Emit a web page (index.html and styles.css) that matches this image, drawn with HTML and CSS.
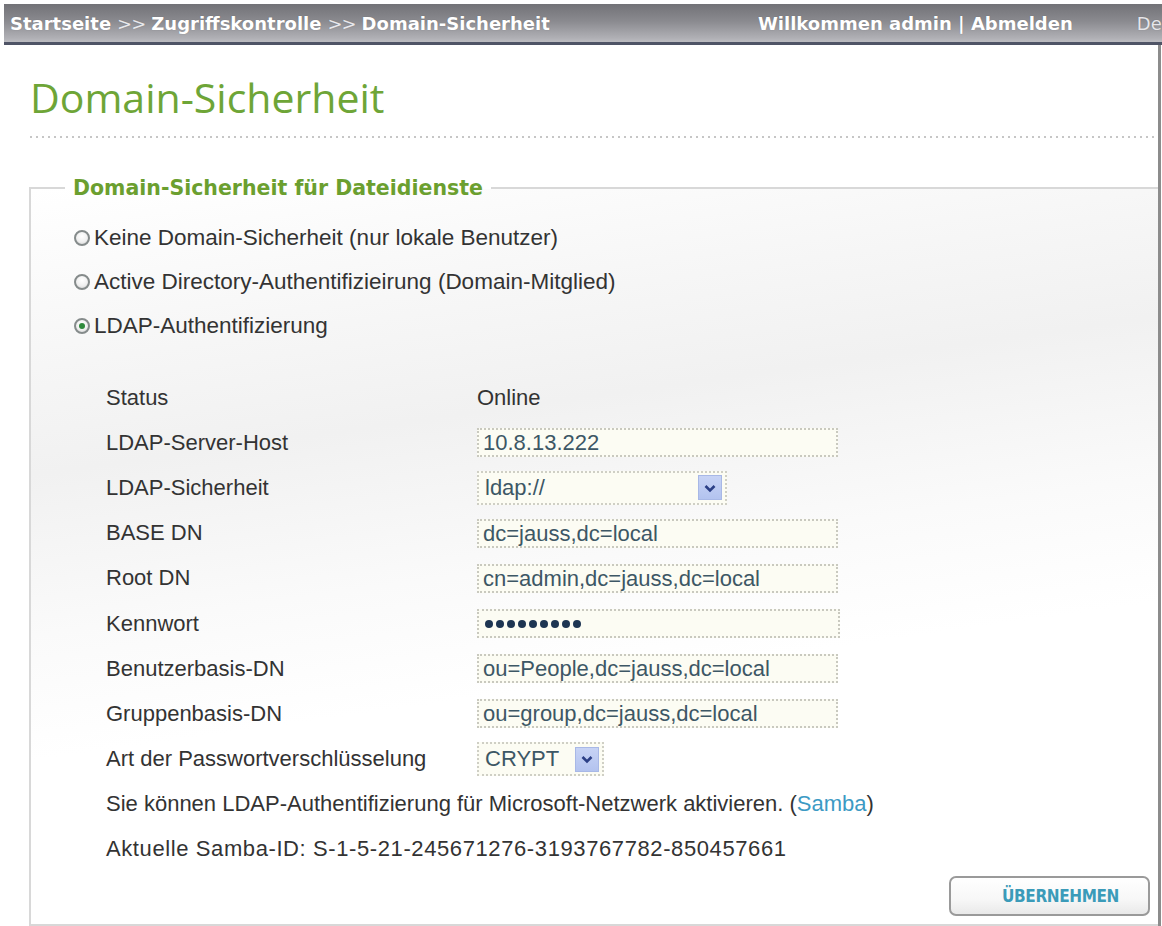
FILE: index.html
```html
<!DOCTYPE html>
<html lang="de">
<head>
<meta charset="utf-8">
<title>Domain-Sicherheit</title>
<link rel="stylesheet" href="styles.css">
</head>
<body>
<div class="topbar">
  <div class="crumbs"><b>Startseite</b><span class="sep">&gt;&gt;</span><b>Zugriffskontrolle</b><span class="sep">&gt;&gt;</span><b>Domain-Sicherheit</b></div>
  <div class="user"><b>Willkommen admin | Abmelden</b><span class="lang">De</span></div>
</div>
<div class="page">
  <h1 class="title">Domain-Sicherheit</h1>
  <div class="dots"></div>
  <fieldset class="group">
    <legend class="legend">Domain-Sicherheit für Dateidienste</legend>
    <div class="options">
      <div class="opt"><span class="radio"></span><span>Keine Domain-Sicherheit (nur lokale Benutzer)</span></div>
      <div class="opt"><span class="radio"></span><span>Active Directory-Authentifizieirung (Domain-Mitglied)</span></div>
      <div class="opt"><span class="radio checked"></span><span>LDAP-Authentifizierung</span></div>
    </div>
    <div class="form">
      <div class="lbl">Status</div><div class="val">Online</div>
      <div class="lbl">LDAP-Server-Host</div><div class="val"><div class="input">10.8.13.222</div></div>
      <div class="lbl">LDAP-Sicherheit</div>
      <div class="val"><div class="select sel-wide"><span>ldap://</span><span class="arrow"><svg width="16" height="16" viewBox="0 0 16 16"><path d="M3.5 6 L8 10.5 L12.5 6" fill="none" stroke="#2b3f86" stroke-width="2.6"/></svg></span></div></div>
      <div class="lbl">BASE DN</div><div class="val"><div class="input">dc=jauss,dc=local</div></div>
      <div class="lbl">Root DN</div><div class="val"><div class="input">cn=admin,dc=jauss,dc=local</div></div>
      <div class="lbl">Kennwort</div><div class="val"><div class="input pw"><i></i><i></i><i></i><i></i><i></i><i></i><i></i><i></i><i></i></div></div>
      <div class="lbl">Benutzerbasis-DN</div><div class="val"><div class="input">ou=People,dc=jauss,dc=local</div></div>
      <div class="lbl">Gruppenbasis-DN</div><div class="val"><div class="input">ou=group,dc=jauss,dc=local</div></div>
      <div class="lbl">Art der Passwortverschlüsselung</div>
      <div class="val"><div class="select sel-small"><span>CRYPT</span><span class="arrow"><svg width="16" height="16" viewBox="0 0 16 16"><path d="M3.5 6 L8 10.5 L12.5 6" fill="none" stroke="#2b3f86" stroke-width="2.6"/></svg></span></div></div>
      <div class="full">Sie können LDAP-Authentifizierung für Microsoft-Netzwerk aktivieren. (<span class="link">Samba</span>)</div>
      <div class="full sid">Aktuelle Samba-ID: S-1-5-21-245671276-3193767782-850457661</div>
    </div>
    <div class="actions"><button class="btn" type="button">ÜBERNEHMEN</button></div>
  </fieldset>
</div>
</body>
</html>
```

FILE: styles.css
```css
html, body {
  margin: 0;
  padding: 0;
  background: #ffffff;
  overflow: hidden;
}
body {
  width: 1162px;
  height: 926px;
  font-family: "Liberation Sans", Arial, sans-serif;
}

.topbar {
  margin: 4px 0 0 4px;
  height: 38px;
  border-bottom: 3px solid #4f5466;
  background: linear-gradient(#727277 0%, #8a8a8f 45%, #b0b0b5 90%, #bcbcc1 100%);
  display: flex;
  align-items: center;
  overflow: hidden;
  white-space: nowrap;
  font-family: "DejaVu Sans", Verdana, sans-serif;
  font-size: 18px;
  color: #ffffff;
}
.crumbs {
  width: 748px;
  padding-left: 6px;
  flex: 0 0 auto;
  text-shadow: 0 0 1px rgba(0,0,0,0.25);
}
.crumbs b { font-weight: 700; }
.sep {
  color: #e8e8ec;
  font-weight: 400;
  margin: 0 6px;
  letter-spacing: -1px;
}
.user {
  flex: 0 0 auto;
  text-shadow: 0 0 1px rgba(0,0,0,0.25);
}
.lang {
  margin-left: 64px;
  color: #e6e6ea;
  font-weight: 400;
}

.page {
  margin-right: 1px;
  border-right: 3px solid #8c8c8c;
  height: 883px;
}

.title {
  margin: 0;
  padding: 28px 0 0 30px;
  font-family: "Open Sans", "DejaVu Sans", sans-serif;
  font-weight: 400;
  font-size: 41px;
  line-height: 48px;
  color: #6ea537;
}
.dots {
  margin: 15px 0 0 30px;
  height: 2px;
  background-image: linear-gradient(to right, #c6c6c6 2px, transparent 2px);
  background-size: 6px 2px;
}

.group {
  margin: 39px 0 0 29px;
  padding: 0 0 8px 0;
  border: 2px solid #d8d8d8;
  border-right: none;
  min-width: 0;
  background: linear-gradient(172deg, #ffffff 0%, #f6f6f6 20%, #f1f1f1 32%, #fafafa 50%, #ffffff 64%, #ffffff 100%);
}
.legend {
  margin-left: 34px;
  padding: 0 8px;
  font-family: "DejaVu Sans", Verdana, sans-serif;
  font-weight: 700;
  font-size: 20.5px;
  line-height: 22px;
  color: #6b9f2f;
}

.options {
  padding: 17px 0 0 43px;
}
.opt {
  height: 44px;
  display: flex;
  align-items: center;
  gap: 4px;
  font-size: 22.5px;
  color: #333333;
}
.radio {
  width: 12px;
  height: 12px;
  border-radius: 50%;
  border: 2px solid #858b8b;
  background: radial-gradient(circle at 50% 35%, #ffffff 0%, #f0f0f0 55%, #d2d2d2 100%);
  position: relative;
  flex: 0 0 auto;
}
.radio.checked::after {
  content: "";
  position: absolute;
  left: 3px;
  top: 3px;
  width: 6px;
  height: 6px;
  border-radius: 50%;
  background: #2f8a3c;
}

.form {
  margin-top: 27px;
  padding-left: 75px;
  display: grid;
  grid-template-columns: 371px 1fr;
  grid-auto-rows: 45.2px;
  align-items: center;
  font-size: 22px;
  color: #333333;
}
.full {
  grid-column: 1 / -1;
}
.sid { letter-spacing: 0.6px; }
.link { color: #3c9ac4; }

.input {
  width: 353px;
  height: 25px;
  padding-left: 4px;
  border: 2px dotted #c9c9bf;
  background: #fcfcf3;
  color: #3d5765;
  font-size: 22px;
  line-height: 25px;
  display: flex;
  align-items: center;
}
.input.pw {
  gap: 3px;
  padding-left: 6px;
}
.input.pw i {
  width: 8px;
  height: 8px;
  border-radius: 50%;
  background: #1d3552;
}
.select {
  height: 30px;
  border: 2px dotted #cfcfc5;
  background: #fcfcf3;
  color: #3d5765;
  display: flex;
  align-items: center;
  justify-content: space-between;
  padding: 0 3px 0 6px;
  font-size: 22px;
}
.sel-wide { width: 237px; }
.sel-small { width: 114px; }
.arrow {
  width: 24px;
  height: 25px;
  background: linear-gradient(#c7d3f5, #b3c3ef);
  border: 1px solid #a8b8e6;
  box-sizing: border-box;
  display: flex;
  align-items: center;
  justify-content: center;
}

.actions {
  display: flex;
  justify-content: flex-end;
  padding-right: 8px;
  margin-top: 4px;
}
.btn {
  width: 201px;
  height: 40px;
  border: 2px solid #9a9a9a;
  border-radius: 7px;
  background: linear-gradient(#ffffff 0%, #f7f7f7 60%, #e9e9e9 100%);
  font-family: "DejaVu Sans Condensed", "DejaVu Sans", sans-serif;
  font-stretch: condensed;
  font-weight: 700;
  font-size: 17px;
  letter-spacing: -0.4px;
  color: #3b9bb9;
  padding: 0 0 0 22px;
}
```
